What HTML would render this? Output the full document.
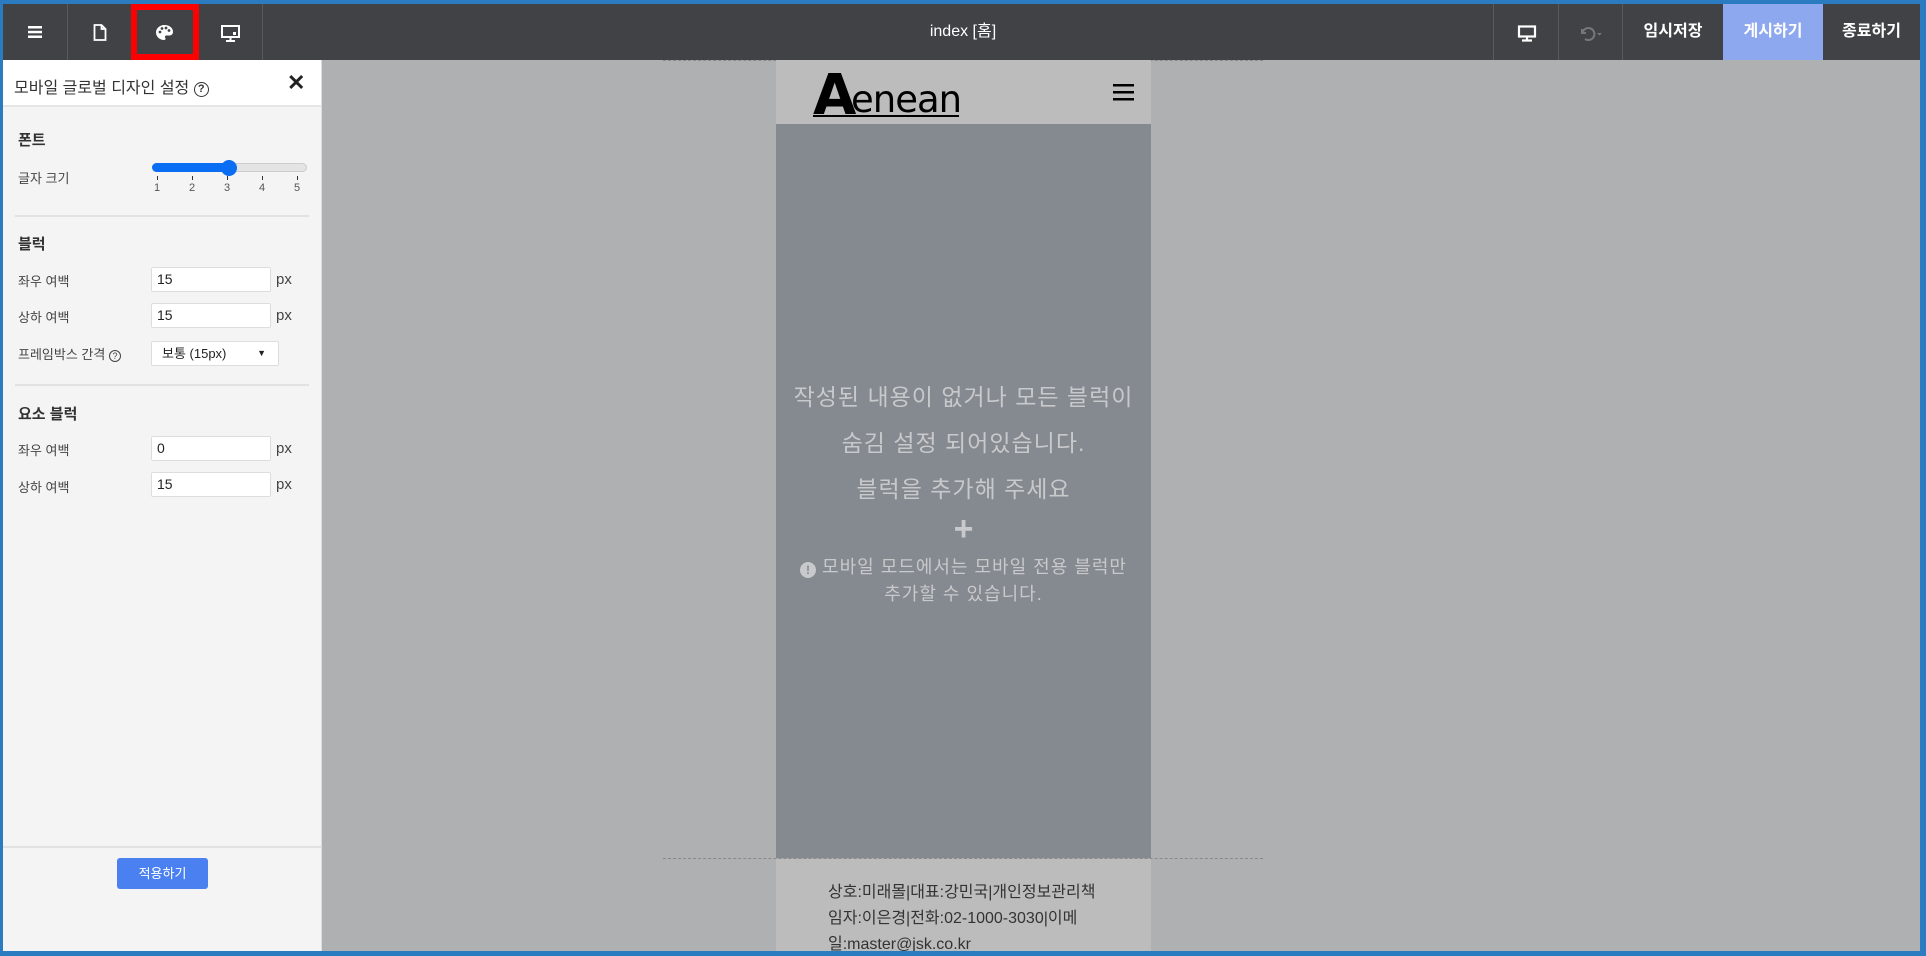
<!DOCTYPE html>
<html><head><meta charset="utf-8"><style>
*{box-sizing:border-box;margin:0;padding:0}
body{width:1926px;height:956px;overflow:hidden;background:#2a7bc0;font-family:"Liberation Sans","Noto Sans CJK KR",sans-serif;position:relative}
.a{position:absolute}
#tb{left:3px;top:4px;width:1917px;height:56px;background:#414245}
.sep{position:absolute;top:0;width:1px;height:56px;background:#5a5b5e}
.tbt{position:absolute;top:0;height:56px;line-height:56px;color:#fff;font-size:16px;font-weight:bold;text-align:center}
#canvas{left:3px;top:60px;width:1917px;height:891px;background:#afb0b2;overflow:hidden}
#panel{left:3px;top:60px;width:319px;height:891px;background:#f4f4f4;border-right:1px solid #ddd}
.lbl{position:absolute;left:15px;font-size:13px;color:#444}
.h{position:absolute;left:15px;font-size:15px;font-weight:bold;color:#333}
.inp{position:absolute;left:148px;width:120px;height:25px;background:#fff;border:1px solid #ddd;border-radius:2px;font-size:14px;line-height:23px;padding-left:5px;color:#222}
.px{position:absolute;left:273px;font-size:15px;color:#444}
.hr{position:absolute;left:12px;width:294px;height:2px;background:#e2e2e2}
.ct{color:#c8c9cb;text-align:center;position:absolute;left:0;width:375px}
</style></head><body>
<div id="tb" class="a">
 <div class="sep" style="left:64px"></div><div class="sep" style="left:128px"></div><div class="sep" style="left:195px"></div><div class="sep" style="left:259px"></div>
 <svg class="a" style="left:24px;top:20px" width="16" height="16" viewBox="0 0 16 16" fill="#fff"><rect x="1" y="2" width="14" height="2.5"/><rect x="1" y="6.8" width="14" height="2.5"/><rect x="1" y="11.5" width="14" height="2.5"/></svg>
 <svg class="a" style="left:90px;top:20px" width="14" height="17" viewBox="0 0 14 17" fill="none" stroke="#fff" stroke-width="1.8"><path d="M1.5 1h7l4 4v11h-11z M8.5 1v4h4"/></svg>
 <div class="a" style="left:128px;top:0;width:68px;height:56px;border:6px solid #f00"></div>
 <svg class="a" style="left:152px;top:20px" width="19" height="17" viewBox="0 0 19 17"><path d="M9.5 1C4.5 1 1 4.5 1 8.5s3.5 7.5 8 7.5c1.5 0 2-1 1.2-2.2-.8-1.2 0-2.3 1.4-2.3H14c2.5 0 4-1.5 4-3.8C18 4 14.5 1 9.5 1z" fill="#fff"/><circle cx="5" cy="8" r="1.4" fill="#414245"/><circle cx="7" cy="4.5" r="1.4" fill="#414245"/><circle cx="11" cy="4" r="1.4" fill="#414245"/><circle cx="14" cy="6.5" r="1.4" fill="#414245"/></svg>
 <svg class="a" style="left:218px;top:21px" width="19" height="17" viewBox="0 0 19 17" fill="none" stroke="#fff" stroke-width="2"><rect x="1" y="1" width="17" height="11"/><path d="M9.5 12v3M5 16h9"/><rect x="12" y="7" width="3" height="3" fill="#fff" stroke="none"/></svg>
 <div class="tbt" style="left:860px;width:200px;font-weight:normal;font-size:16px">index [홈]</div>
 <div class="sep" style="left:1490px"></div><div class="sep" style="left:1555px"></div><div class="sep" style="left:1619px"></div>
 <svg class="a" style="left:1514px;top:21px" width="20" height="17" viewBox="0 0 20 17" fill="none" stroke="#fff" stroke-width="2.2"><rect x="2" y="1.5" width="16" height="10"/><path d="M10 12v3M5 15.5h10"/></svg>
 <svg class="a" style="left:1575px;top:22px" width="26" height="16" viewBox="0 0 26 16" fill="none" stroke="#777" stroke-width="2"><path d="M4 3v4h4"/><path d="M4.5 7A6 6 0 1 1 7 13"/><path d="M19 7l2.5 2.5L24 7z" fill="#777" stroke="none"/></svg>
 <div class="tbt" style="left:1620px;width:100px">임시저장</div>
 <div class="tbt" style="left:1720px;width:100px;background:#8ea8f0">게시하기</div>
 <div class="tbt" style="left:1820px;width:97px">종료하기</div>
</div>
<div id="canvas" class="a">
 <div class="a" style="left:660px;top:0;width:600px;border-top:1px dashed #8a8a8a"></div>
 <div class="a" style="left:773px;top:0;width:375px;height:64px;background:#bcbcbc">
  <div class="a" style="left:37px;top:6px;font-size:56px;font-weight:bold;color:#000;line-height:60px;font-family:'DejaVu Sans',sans-serif">A</div>
  <div class="a" style="left:75px;top:20px;font-size:37px;color:#000;line-height:40px;font-family:'DejaVu Sans',sans-serif;letter-spacing:-1px">enean</div>
  <div class="a" style="left:37px;top:55px;width:146px;height:2px;background:#000"></div>
  <svg class="a" style="left:337px;top:24px" width="21" height="17" viewBox="0 0 21 17" fill="#000"><rect y="0" width="21" height="2.5"/><rect y="7" width="21" height="2.5"/><rect y="14" width="21" height="2.5"/></svg>
 </div>
 <div class="a" style="left:773px;top:64px;width:375px;height:734px;background:#858990">
  <div class="ct" style="top:250px;font-size:23px;line-height:46px;letter-spacing:1px">작성된 내용이 없거나 모든 블럭이<br>숨김 설정 되어있습니다.<br>블럭을 추가해 주세요</div>
  <div class="ct" style="top:387px;font-size:34px;font-weight:bold;line-height:36px">+</div>
  <div class="ct" style="top:430px;font-size:18px;line-height:27px;letter-spacing:1px"><span style="display:inline-block;width:16px;height:16px;border-radius:50%;background:#c8c9cb;color:#858990;font-size:12px;line-height:16px;font-weight:bold;vertical-align:-1px;letter-spacing:0">!</span> 모바일 모드에서는 모바일 전용 블럭만<br>추가할 수 있습니다.</div>
 </div>
 <div class="a" style="left:660px;top:798px;width:600px;border-top:1px dashed #8a8a8a"></div>
 <div class="a" style="left:773px;top:799px;width:375px;height:100px;background:#bcbcbc">
  <div class="a" style="left:52px;top:21px;font-size:16px;line-height:26px;color:#333">상호:미래몰|대표:강민국|개인정보관리책<br>임자:이은경|전화:02-1000-3030|이메<br>일:master@jsk.co.kr</div>
 </div>
</div>
<div id="panel" class="a">
 <div class="a" style="left:0;top:0;width:318px;height:47px;background:#fff;border-bottom:2px solid #e6e6e6"></div>
 <div class="a" style="left:11px;top:14px;font-size:16px;color:#333">모바일 글로벌 디자인 설정 <span style="display:inline-block;width:15px;height:15px;border:1.5px solid #333;border-radius:50%;font-size:11px;line-height:12px;text-align:center;font-weight:bold;vertical-align:1px">?</span></div>
 <div class="a" style="left:284px;top:10px;font-size:22px;font-weight:bold;color:#222">✕</div>
 <div class="h" style="top:69px">폰트</div>
 <div class="lbl" style="top:108px">글자 크기</div>
 <div class="a" style="left:149px;top:103px;width:155px;height:9px;border-radius:5px;background:#e4e4e4;border:1px solid #ccc"></div>
 <div class="a" style="left:149px;top:103px;width:78px;height:9px;border-radius:5px;background:#0a6ef5"></div>
 <div class="a" style="left:218px;top:100px;width:16px;height:16px;border-radius:50%;background:#0a6ef5"></div>
 <div class="a" style="left:148px;top:116px;width:160px;font-size:11px;color:#555">
  <span class="a" style="left:6px;top:0;width:1px;height:4px;background:#333"></span><span class="a" style="left:41px;top:0;width:1px;height:4px;background:#333"></span><span class="a" style="left:76px;top:0;width:1px;height:4px;background:#333"></span><span class="a" style="left:111px;top:0;width:1px;height:4px;background:#333"></span><span class="a" style="left:146px;top:0;width:1px;height:4px;background:#333"></span>
  <span class="a" style="left:3px;top:6px">1</span><span class="a" style="left:38px;top:6px">2</span><span class="a" style="left:73px;top:6px">3</span><span class="a" style="left:108px;top:6px">4</span><span class="a" style="left:143px;top:6px">5</span>
 </div>
 <div class="hr" style="top:155px"></div>
 <div class="h" style="top:173px">블럭</div>
 <div class="lbl" style="top:211px">좌우 여백</div><div class="inp" style="top:207px">15</div><div class="px" style="top:211px">px</div>
 <div class="lbl" style="top:247px">상하 여백</div><div class="inp" style="top:243px">15</div><div class="px" style="top:247px">px</div>
 <div class="lbl" style="top:284px">프레임박스 간격 <span style="display:inline-block;width:12px;height:12px;border:1px solid #444;border-radius:50%;font-size:9px;line-height:10px;text-align:center">?</span></div>
 <div class="inp" style="top:281px;width:128px;font-size:13px;padding-left:10px">보통 (15px)<span class="a" style="right:12px;top:0;font-size:9px">▼</span></div>
 <div class="hr" style="top:324px"></div>
 <div class="h" style="top:343px">요소 블럭</div>
 <div class="lbl" style="top:380px">좌우 여백</div><div class="inp" style="top:376px">0</div><div class="px" style="top:380px">px</div>
 <div class="lbl" style="top:417px">상하 여백</div><div class="inp" style="top:412px">15</div><div class="px" style="top:416px">px</div>
 <div class="a" style="left:0;top:786px;width:318px;height:2px;background:#e2e2e2"></div>
 <div class="a" style="left:114px;top:798px;width:91px;height:31px;background:#4a80f0;border-radius:3px;color:#fff;font-size:13px;line-height:31px;text-align:center">적용하기</div>
</div>
</body></html>
